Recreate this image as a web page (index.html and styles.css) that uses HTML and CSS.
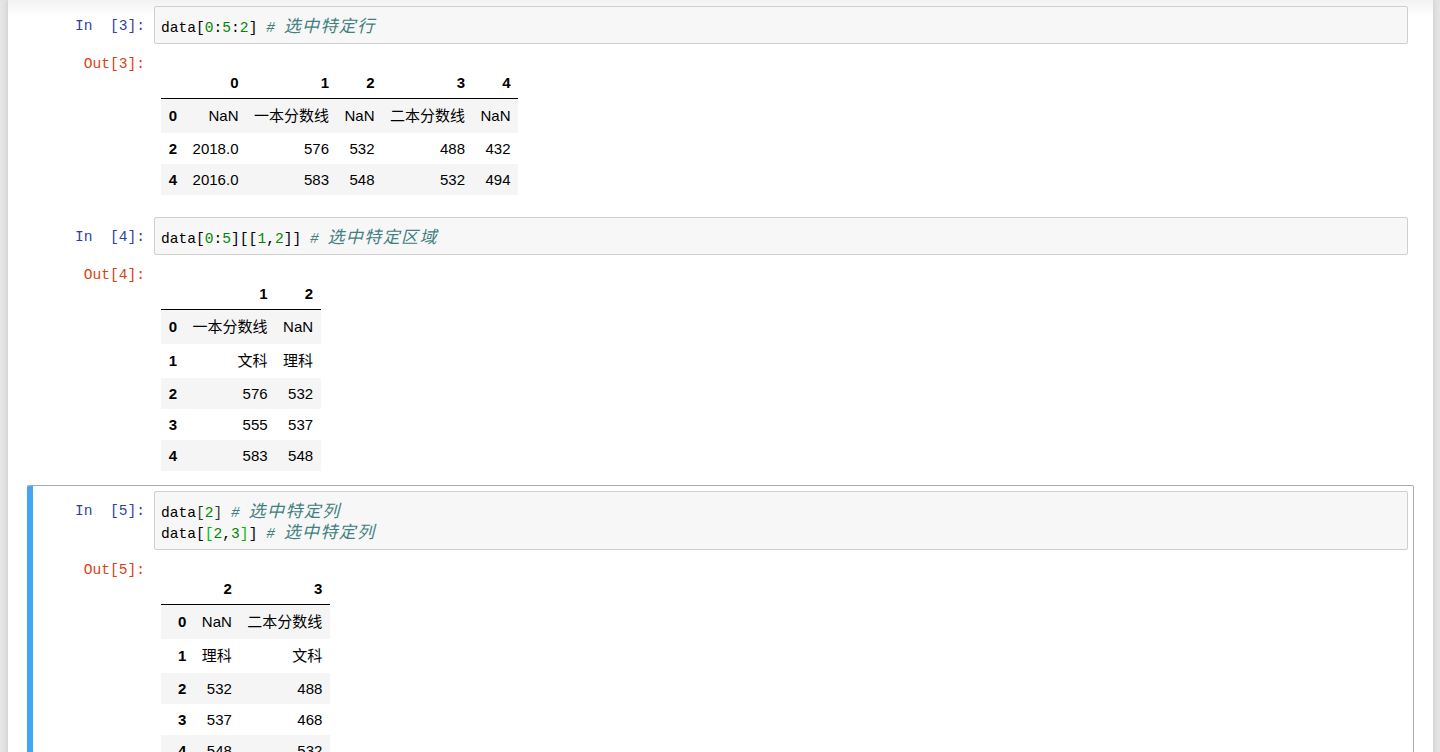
FILE: index.html
```html
<!DOCTYPE html>
<html lang="zh">
<head>
<meta charset="utf-8">
<title>Notebook</title>
<link rel="stylesheet" href="styles.css">
</head>
<body>
<div class="site">
  <div class="nb">

    <div class="cell">
      <div class="row">
        <div class="prompt in">In&nbsp;&nbsp;[3]:</div>
        <div class="input"><div class="line">data[<span class="n">0</span>:<span class="n">5</span>:<span class="n">2</span>] <span class="c"># <span class="zh">选中特定行</span></span></div></div>
      </div>
      <div class="row out-row">
        <div class="prompt out">Out[3]:</div>
        <div class="output">
          <table class="df">
            <thead>
              <tr><th></th><th>0</th><th>1</th><th>2</th><th>3</th><th>4</th></tr>
            </thead>
            <tbody>
              <tr class="cjk"><th>0</th><td>NaN</td><td>一本分数线</td><td>NaN</td><td>二本分数线</td><td>NaN</td></tr>
              <tr><th>2</th><td>2018.0</td><td>576</td><td>532</td><td>488</td><td>432</td></tr>
              <tr><th>4</th><td>2016.0</td><td>583</td><td>548</td><td>532</td><td>494</td></tr>
            </tbody>
          </table>
        </div>
      </div>
    </div>

    <div class="cell">
      <div class="row">
        <div class="prompt in">In&nbsp;&nbsp;[4]:</div>
        <div class="input"><div class="line">data[<span class="n">0</span>:<span class="n">5</span>][[<span class="n">1</span>,<span class="n">2</span>]] <span class="c"># <span class="zh">选中特定区域</span></span></div></div>
      </div>
      <div class="row out-row">
        <div class="prompt out">Out[4]:</div>
        <div class="output">
          <table class="df">
            <thead>
              <tr><th></th><th>1</th><th>2</th></tr>
            </thead>
            <tbody>
              <tr class="cjk"><th>0</th><td>一本分数线</td><td>NaN</td></tr>
              <tr class="cjk"><th>1</th><td>文科</td><td>理科</td></tr>
              <tr><th>2</th><td>576</td><td>532</td></tr>
              <tr><th>3</th><td>555</td><td>537</td></tr>
              <tr><th>4</th><td>583</td><td>548</td></tr>
            </tbody>
          </table>
        </div>
      </div>
    </div>

    <div class="cell selected">
      <div class="row">
        <div class="prompt in">In&nbsp;&nbsp;[5]:</div>
        <div class="input">
          <div class="line">data<span class="b">[</span><span class="n">2</span><span class="b">]</span> <span class="c"># <span class="zh">选中特定列</span></span></div>
          <div class="line">data[<span class="m">[</span><span class="n">2</span>,<span class="n">3</span><span class="m">]</span>] <span class="c"># <span class="zh">选中特定列</span></span></div>
        </div>
      </div>
      <div class="row out-row">
        <div class="prompt out">Out[5]:</div>
        <div class="output">
          <table class="df wide-idx">
            <thead>
              <tr><th></th><th>2</th><th>3</th></tr>
            </thead>
            <tbody>
              <tr class="cjk"><th>0</th><td>NaN</td><td>二本分数线</td></tr>
              <tr class="cjk"><th>1</th><td>理科</td><td>文科</td></tr>
              <tr><th>2</th><td>532</td><td>488</td></tr>
              <tr><th>3</th><td>537</td><td>468</td></tr>
              <tr><th>4</th><td>548</td><td>532</td></tr>
            </tbody>
          </table>
        </div>
      </div>
    </div>

  </div>
</div>
</body>
</html>
```

FILE: styles.css
```css
html, body {
  margin: 0;
  padding: 0;
}

body {
  background: #e6e6e6;
  overflow: hidden;
}

.site {
  padding: 0 7px 0 8px;
}

.nb {
  background: linear-gradient(#f2f2f2 0px, #ffffff 16px);
  box-shadow: 0 0 6px 1px rgba(87, 87, 87, 0.18);
  padding: 0 19px 40px 19px;
  min-height: 900px;
}

.cell {
  border: 1px solid transparent;
  border-radius: 2px;
  padding: 5px 5px 0 5px;
}

.cell.selected {
  border-color: #ababab;
  border-left-color: #42a5f5;
  box-shadow: inset 5px 0 0 #42a5f5;
}

.row {
  display: flex;
  align-items: flex-start;
}

.prompt {
  flex: 0 0 121px;
  box-sizing: border-box;
  padding-right: 9px;
  text-align: right;
  font-family: "Liberation Mono", "Noto Sans CJK SC", monospace;
  font-size: 14.6px;
  line-height: 17px;
  white-space: nowrap;
}

.prompt.in {
  color: #303f9f;
  padding-top: 12px;
}

.prompt.out {
  color: #d84315;
  padding-top: 2px;
}

.input {
  flex: 1;
  background: #f7f7f7;
  border: 1px solid #cfcfcf;
  border-radius: 2px;
  padding: 7px 6px 8px 6px;
  font-family: "Liberation Mono", "Noto Sans CJK SC", monospace;
  font-size: 14.6px;
  line-height: 21px;
  color: #000;
}

.line {
  height: 21px;
  white-space: pre;
}

.n {
  color: #008800;
}

.b {
  color: #333;
}

.m {
  color: #00bb00;
}

.c {
  color: #408080;
  font-style: italic;
}

.zh {
  font-family: "Noto Sans CJK SC", sans-serif;
  font-size: 17px;
  letter-spacing: 1.4px;
}

.out-row {
  padding-top: 10px;
  padding-bottom: 15px;
}

.cell:nth-child(2) .out-row {
  padding-bottom: 13px;
}

.output {
  flex: 1;
  padding-top: 13px;
  padding-left: 7px;
}

.df {
  border-collapse: collapse;
  border-spacing: 0;
  font-family: "Liberation Sans", "Noto Sans CJK SC", sans-serif;
  font-size: 15px;
  color: #000;
}

.df th,
.df td {
  padding: 7px 7.75px;
  line-height: 17px;
  text-align: right;
  vertical-align: middle;
  white-space: nowrap;
}

.df th {
  font-weight: bold;
}

.df thead tr {
  border-bottom: 1px solid #000;
}

.df tbody tr:nth-child(odd) {
  background: #f5f5f5;
}

.df tr.cjk th,
.df tr.cjk td {
  line-height: 20px;
}

.df.wide-idx tbody th {
  padding-left: 17px;
}
```
